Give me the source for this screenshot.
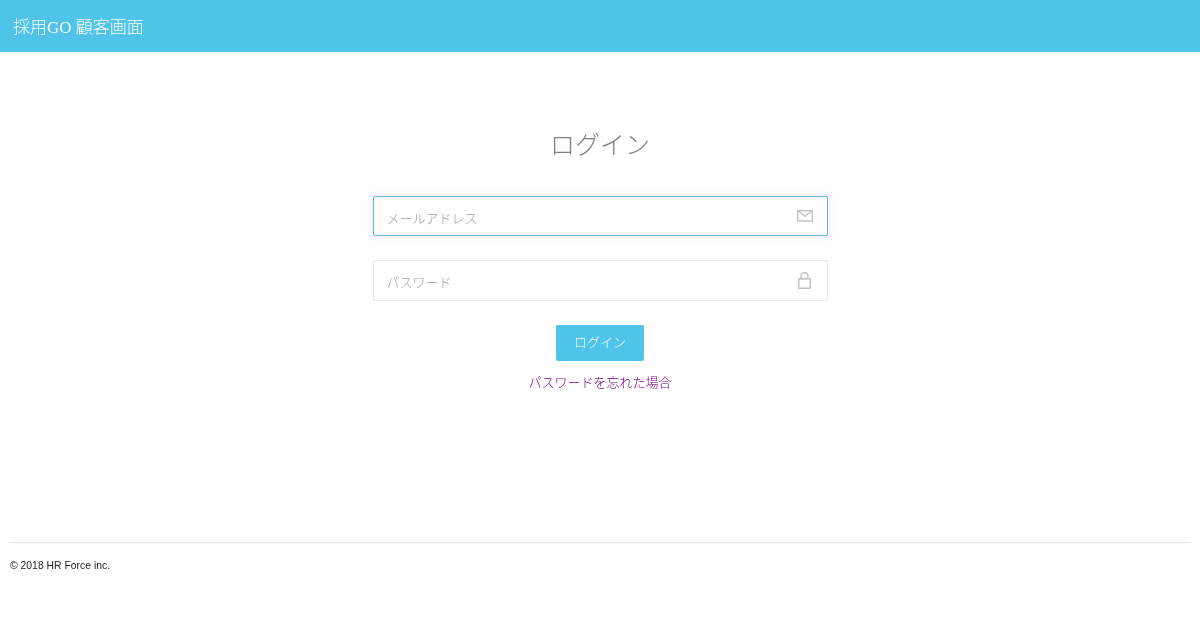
<div class="page">
  <header class="bar"><span class="brand">採用GO 顧客画面</span></header>
  <main class="main">
    <h1>ログイン</h1>
    <form class="form">
      <label class="field focus">
        <span class="ph">メールアドレス</span>
        <svg width="18" height="14" viewBox="0 0 18 14" fill="none" stroke="#c0c0c0" stroke-width="1.4"><rect x="2.7" y="1.7" width="14.6" height="10.3" /><path d="M2.7 1.7 10 7.2 17.3 1.7" /></svg>
      </label>
      <label class="field">
        <span class="ph">パスワード</span>
        <svg width="16" height="17" viewBox="0 0 16 17" fill="none" stroke="#c0c0c0" stroke-width="1.4"><rect x="1.7" y="6.7" width="11.6" height="9.6" rx="0.5" /><path d="M4 6.7V4.2a3.5 3.5 0 0 1 7 0v2.5" /></svg>
      </label>
      <button type="button" class="btn"><span>ログイン</span></button>
      <a class="link" href="#forgot">パスワードを忘れた場合</a>
    </form>
  </main>
  <footer class="foot">© 2018 HR Force inc.</footer>
</div>

<style>
  :global(body) { margin: 0; background: #fff; }
  .page { width: 1200px; height: 630px; display: flex; flex-direction: column; font-family: "Liberation Sans", "Noto Sans CJK JP", sans-serif; will-change: transform; }
  .bar { height: 52px; background: #4fc3e8; display: flex; align-items: center; padding: 0 13px 2px; box-sizing: border-box; }
  .brand { color: #fff; font-family: "Liberation Serif", "Noto Sans CJK JP", serif; font-size: 17px; font-weight: 300; }
  .main { height: 490px; box-sizing: border-box; padding-top: 76px; display: flex; flex-direction: column; align-items: center; }
  h1 { margin: 0 0 36px; font-weight: 300; font-size: 25px; line-height: 32px; color: #808080; position: relative; top: 1px; }
  .form { width: 455px; display: flex; flex-direction: column; align-items: center; }
  .field { width: 100%; height: 41px; box-sizing: border-box; border: 1px solid #e6e6e6; border-radius: 2px; display: flex; justify-content: space-between; align-items: center; padding: 0 14px 0 13px; margin-bottom: 24px; }
  .field.focus { height: 40px; border-color: #5fb5d8; box-shadow: 0 0 6px rgba(200,170,230,.3); }
  .ph { font-size: 13px; color: #a0a0a0; padding-top: 2px; font-weight: 300; }
  .btn { width: 88px; height: 36px; border: 0; border-radius: 2px; background: #4fc3e8; color: #fff; padding: 0 0 3px; font: 300 13px "Liberation Sans", "Noto Sans CJK JP", sans-serif; }
  .link { margin-top: 13px; font-size: 13px; line-height: 18px; color: #800080; text-decoration: none; font-weight: 300; }
  .foot { margin: 0 10px; border-top: 1px solid #e3e3e3; padding-top: 16px; font-size: 10.4px; line-height: 14px; color: #222; }
</style>
